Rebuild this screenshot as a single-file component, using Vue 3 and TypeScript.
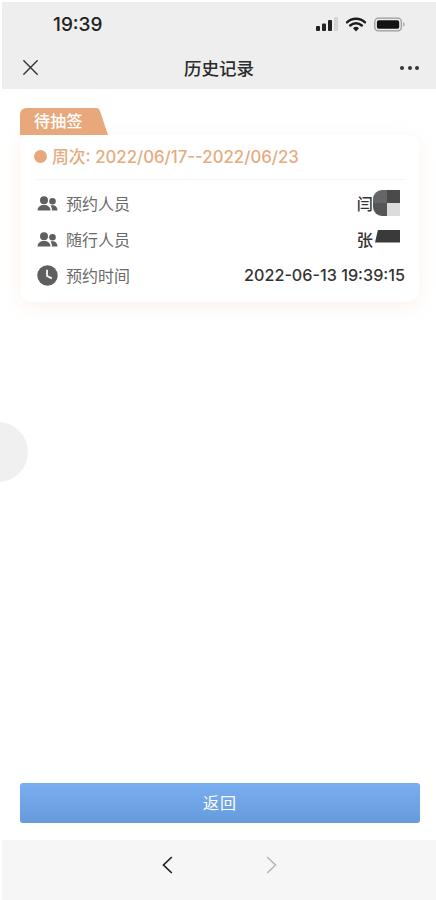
<script setup lang="ts">
interface Row { icon: 'people' | 'clock'; label: string; value: string; mask?: 'a' | 'b' }
const rows: Row[] = [
  { icon: 'people', label: '预约人员', value: '闫', mask: 'a' },
  { icon: 'people', label: '随行人员', value: '张', mask: 'b' },
  { icon: 'clock', label: '预约时间', value: '2022-06-13 19:39:15' },
]
</script>

<template>
  <div class="page">
    <header class="head">
      <div class="status">
        <span class="time">19:39</span>
        <div class="status-icons">
          <svg width="22" height="14" viewBox="0 0 22 14">
            <rect x="0" y="9" width="4" height="5" rx="1" fill="#222" />
            <rect x="6" y="6.500" width="4" height="7.500" rx="1" fill="#222" />
            <rect x="12" y="3" width="4" height="11" rx="1" fill="#222" />
            <rect x="18" y="0" width="4" height="14" rx="1" fill="#d5d5d5" />
          </svg>
          <svg width="20" height="15" viewBox="0 0 20 15">
            <path d="M1 5.300a13 13 0 0 1 18 0M4.200 8.500a8.500 8.500 0 0 1 11.600 0" fill="none" stroke="#1c1c1c" stroke-width="2.400" stroke-linecap="round" />
            <path d="M7 11.200a4.300 4.300 0 0 1 6 0L10 14.500z" fill="#1c1c1c" />
          </svg>
          <svg width="31" height="15" viewBox="0 0 32 15">
            <rect x="0.800" y="0.800" width="27.400" height="13.400" rx="3.800" fill="none" stroke="#999" stroke-width="1.300" />
            <rect x="3" y="3" width="23" height="9" rx="2" fill="#141414" />
            <path d="M30 5.200c1.200.4 1.700 1.200 1.700 2.300s-.5 1.900-1.700 2.300z" fill="#aaa" />
          </svg>
        </div>
      </div>
      <div class="nav">
        <svg class="close" width="15" height="15" viewBox="0 0 15 15">
          <path d="M.8.8l13.400 13.400M14.200.8L.8 14.200" stroke="#333" stroke-width="1.400" stroke-linecap="round" />
        </svg>
        <span class="title">历史记录</span>
        <div class="dots"><i></i><i></i><i></i></div>
      </div>
    </header>

    <main class="content">
      <div class="tag"><span>待抽签</span></div>
      <section class="card">
        <div class="week"><i class="dot"></i><span>周次: 2022/06/17--2022/06/23</span></div>
        <div class="rows">
          <div v-for="row in rows" :key="row.label" class="row">
            <svg v-if="row.icon === 'people'" class="ico people" width="21" height="15" viewBox="0 0 20 15">
              <circle cx="6.500" cy="4.300" r="4" fill="#5f5f5f" />
              <path d="M0 14.500c0-3.500 2.800-5.500 6.500-5.500s6.500 2 6.500 5.500z" fill="#5f5f5f" />
              <circle cx="15" cy="5.300" r="3.300" fill="#5f5f5f" />
              <path d="M14.500 14.500c0-2-.5-3.700-1.600-5 .6-.2 1.300-.3 2-.3 3.200 0 5.100 2 5.100 5.300z" fill="#5f5f5f" />
            </svg>
            <svg v-else class="ico clock" width="21" height="21" viewBox="0 0 22 22">
              <circle cx="11" cy="11" r="10.700" fill="#5f5f5f" />
              <path d="M10.500 5v6.500l5 2.500" fill="none" stroke="#fff" stroke-width="1.800" />
            </svg>
            <span class="label">{{ row.label }}</span>
            <span class="value">
              {{ row.value }}
              <span v-if="row.mask === 'a'" class="mask-a"><i></i><i></i><i></i><i></i></span>
              <span v-if="row.mask === 'b'" class="mask-b"></span>
            </span>
          </div>
        </div>
      </section>
      <div class="side"></div>
    </main>

    <div class="action"><button class="back" type="button">返回</button></div>

    <footer class="foot">
      <svg width="11" height="18" viewBox="0 0 11 18"><path d="M9.800 1L1.500 9l8.300 8" fill="none" stroke="#222" stroke-width="1.700" /></svg>
      <svg width="11" height="18" viewBox="0 0 11 18"><path d="M1.200 1l8.300 8-8.300 8" fill="none" stroke="#b5b5b5" stroke-width="1.500" /></svg>
    </footer>
  </div>
</template>

<style>
html, body { margin: 0; background: #fff; }
</style>

<style scoped>
.page {
  width: 436px;
  height: 900px;
  padding: 2px 0 0 2px;
  box-sizing: border-box;
  display: flex;
  flex-direction: column;
  background: #fff;
  overflow: hidden;
  font-family: "Liberation Sans", "Noto Sans CJK SC", sans-serif;
}
.head { height: 87px; background: #eeeeee; flex: none; }
.status { height: 44px; display: flex; align-items: center; justify-content: space-between; padding: 0 31px 0 51px; }
.time { font-size: 19px; font-weight: 500; color: #222; font-family: Inter, sans-serif; }
.status-icons { display: flex; align-items: center; gap: 8px; }
.nav { height: 43px; display: grid; grid-template-columns: 1fr auto 1fr; align-items: center; padding: 0 17px 0 21px; }
.title { font-size: 17.500px; font-weight: 500; color: #2b2b2b; font-family: "Noto Sans CJK SC", sans-serif; margin: -1px 4px 0 0; }
.dots { display: flex; gap: 3.500px; justify-self: end; }
.dots i { width: 4px; height: 4px; border-radius: 50%; background: #333; }
.content { flex: 1; position: relative; padding: 19px 17px 0 18px; }
.tag {
  width: 88px; height: 27px; background: #e8a87c; color: #fff;
  clip-path: path("M0 27V7Q0 0 7 0H76Q79 0 80 3L88 27Z");
  font-size: 16px; font-weight: 500; font-family: "Noto Sans CJK SC", sans-serif; line-height: 25px;
}
.tag span { padding-left: 14px; letter-spacing: 0.300px; }
.card {
  background: #fff; border-radius: 0 12px 12px 12px; height: 167px; box-sizing: border-box;
  box-shadow: 0 4px 18px rgba(232, 168, 124, 0.16); padding: 0 14px 0 16px;
}
.week {
  display: flex; align-items: center; gap: 5px; height: 45px; padding-bottom: 2px; box-sizing: border-box; color: #e6ab80;
  font-size: 16.800px; font-weight: 500; border-bottom: 1px solid #f5f5f5; font-family: Inter, "Noto Sans CJK SC", sans-serif;
}
.dot { width: 13px; height: 13px; background: #e8a87c; border-radius: 50%; margin-left: -2px; flex: none; }
.rows { padding-top: 5px; }
.row { height: 36px; display: flex; align-items: center; }
.ico { flex: none; margin-left: 1px; }
.people { margin-right: 8px; }
.clock { margin-right: 8px; }
.label { font-size: 16px; color: #6a6a6a; font-family: "Noto Sans CJK SC", sans-serif; }
.value { margin-left: auto; display: flex; align-items: center; font-size: 16.200px; font-weight: 450; color: #333; font-family: Inter, "Noto Sans CJK SC", sans-serif; }
.mask-a { display: grid; grid-template-columns: 13.500px 13.500px; grid-template-rows: 13px 13px; margin-right: 5px; margin-top: -1px; margin-left: 0; }
.mask-a i:nth-child(1) { background: #666; border-top-left-radius: 9px; }
.mask-a i:nth-child(2) { background: #4a4a4a; }
.mask-a i:nth-child(3) { background: #555; border-bottom-left-radius: 9px; }
.mask-a i:nth-child(4) { background: #dcdcdc; }
.mask-b { width: 25px; height: 13px; background: #3a3a3a; margin-right: 5px; margin-top: -6px; margin-left: 2px; clip-path: polygon(3px 0, 100% 0, 100% 100%, 0 100%); }
.side { position: absolute; left: -34px; top: 333px; width: 60px; height: 60px; border-radius: 50%; background: #f0f0f0; }
.action { padding: 0 0 0 18px; flex: none; height: 57px; }
.back {
  width: 400px; height: 40px; border: 0; border-radius: 3px; color: #fff; font-size: 16px;
  letter-spacing: 1px; background: linear-gradient(#79aef0, #659bdd); font-family: "Noto Sans CJK SC", sans-serif; padding: 0 0 2px 0;
}
.foot { flex: none; height: 60px; background: #f6f6f6; display: flex; justify-content: center; align-items: center; gap: 93px; padding-bottom: 10px; box-sizing: border-box; }
</style>
